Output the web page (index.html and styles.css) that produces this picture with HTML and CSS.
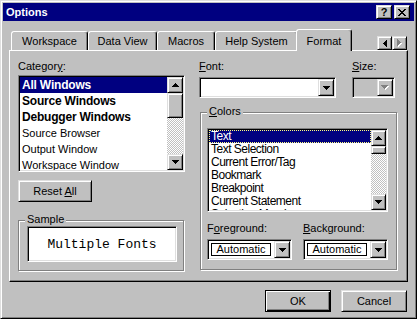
FILE: index.html
```html
<!DOCTYPE html>
<html lang="en">
<head>
    <meta charset="UTF-8">
    <meta name="viewport" content="width=device-width, initial-scale=1.0">
    <title>Options</title>
    <link rel="stylesheet" href="styles.css">
</head>
<body>
<div class="window">
    <div class="titlebar">
        <span class="title">Options</span>
        <div class="caption-buttons">
            <div class="caption-btn raised">?</div>
            <div class="caption-btn raised">
                <svg width="8" height="7" viewBox="0 0 8 7"><path d="M0 0h2v1h-2zM6 0h2v1h-2zM1 1h2v1h-2zM5 1h2v1h-2zM2 2h4v1h-4zM3 3h2v1h-2zM2 4h4v1h-4zM1 5h2v1h-2zM5 5h2v1h-2zM0 6h2v1h-2zM6 6h2v1h-2z"/></svg>
            </div>
        </div>
    </div>

    <div class="client">
        <div class="tabs">
            <div class="tab tab-workspace">Workspace</div>
            <div class="tab tab-dataview">Data View</div>
            <div class="tab tab-macros">Macros</div>
            <div class="tab tab-help">Help System</div>
            <div class="tab tab-format active">Format</div>
            <div class="tab-arrows">
                <div class="tab-arrow raised">
                    <svg width="4" height="7" viewBox="0 0 4 7"><path d="M3 0h1v7h-1v-1h-1v-1h-1v-1h-1v-1h1v-1h1v-1h1z"/></svg>
                </div>
                <div class="tab-arrow raised">
                    <svg width="5" height="8" viewBox="0 0 5 8"><path fill="#fff" d="M1 1h1v1h1v1h1v1h1v1h-1v1h-1v1h-1v1h-1z"/><path fill="#808080" d="M0 0h1v1h1v1h1v1h1v1h-1v1h-1v1h-1v1h-1z"/></svg>
                </div>
            </div>
        </div>

        <div class="panel">
            <div class="left-col">
                <div class="label">Categor<u>y</u>:</div>
                <div class="listbox category sunken">
                    <div class="items">
                        <div class="item bold selected">All Windows</div>
                        <div class="item bold">Source Windows</div>
                        <div class="item bold">Debugger Windows</div>
                        <div class="item">Source Browser</div>
                        <div class="item">Output Window</div>
                        <div class="item">Workspace Window</div>
                    </div>
                    <div class="scrollbar">
                        <div class="sb-btn raised">
                            <svg width="7" height="4" viewBox="0 0 7 4"><path d="M3 0h1v1h1v1h1v1h1v1h-7v-1h1v-1h1v-1h1z"/></svg>
                        </div>
                        <div class="sb-thumb raised"></div>
                        <div class="sb-btn raised down">
                            <svg width="7" height="4" viewBox="0 0 7 4"><path d="M0 0h7v1h-1v1h-1v1h-1v1h-1v-1h-1v-1h-1v-1h-1z"/></svg>
                        </div>
                    </div>
                </div>

                <div class="btn raised reset"><span>Reset <u>A</u>ll</span></div>

                <div class="group sample-group">
                    <span class="group-label">Sample</span>
                    <div class="sample sunken">Multiple Fonts</div>
                </div>
            </div>

            <div class="right-col">
                <div class="top-row">
                    <div class="field font-field">
                        <div class="label"><u>F</u>ont:</div>
                        <div class="combo sunken">
                            <div class="combo-value"></div>
                            <div class="combo-btn raised">
                                <svg width="7" height="4" viewBox="0 0 7 4"><path d="M0 0h7v1h-1v1h-1v1h-1v1h-1v-1h-1v-1h-1v-1h-1z"/></svg>
                            </div>
                        </div>
                    </div>
                    <div class="field size-field">
                        <div class="label"><u>S</u>ize:</div>
                        <div class="combo sunken disabled">
                            <div class="combo-value"></div>
                            <div class="combo-btn raised">
                                <svg width="8" height="5" viewBox="0 0 8 5"><path fill="#fff" d="M1 1h7v1h-1v1h-1v1h-1v1h-1v-1h-1v-1h-1v-1h-1z"/><path fill="#808080" d="M0 0h7v1h-1v1h-1v1h-1v1h-1v-1h-1v-1h-1v-1h-1z"/></svg>
                            </div>
                        </div>
                    </div>
                </div>

                <div class="group colors-group">
                    <span class="group-label"><u>C</u>olors</span>
                    <div class="listbox colors sunken">
                        <div class="items">
                            <div class="item selected focused">Text</div>
                            <div class="item">Text Selection</div>
                            <div class="item">Current Error/Tag</div>
                            <div class="item">Bookmark</div>
                            <div class="item">Breakpoint</div>
                            <div class="item">Current Statement</div>
                            <div class="item">Selection Margin</div>
                        </div>
                        <div class="scrollbar">
                            <div class="sb-btn raised">
                                <svg width="7" height="4" viewBox="0 0 7 4"><path d="M3 0h1v1h1v1h1v1h1v1h-7v-1h1v-1h1v-1h1z"/></svg>
                            </div>
                            <div class="sb-thumb raised"></div>
                            <div class="sb-btn raised down">
                                <svg width="7" height="4" viewBox="0 0 7 4"><path d="M0 0h7v1h-1v1h-1v1h-1v1h-1v-1h-1v-1h-1v-1h-1z"/></svg>
                            </div>
                        </div>
                    </div>

                    <div class="color-fields">
                        <div class="field color-field">
                            <div class="label">F<u>o</u>reground:</div>
                            <div class="combo sunken">
                                <div class="combo-value"><span class="auto-box">Automatic</span></div>
                                <div class="combo-btn raised">
                                    <svg width="7" height="4" viewBox="0 0 7 4"><path d="M0 0h7v1h-1v1h-1v1h-1v1h-1v-1h-1v-1h-1v-1h-1z"/></svg>
                                </div>
                            </div>
                        </div>
                        <div class="field color-field">
                            <div class="label"><u>B</u>ackground:</div>
                            <div class="combo sunken">
                                <div class="combo-value"><span class="auto-box">Automatic</span></div>
                                <div class="combo-btn raised">
                                    <svg width="7" height="4" viewBox="0 0 7 4"><path d="M0 0h7v1h-1v1h-1v1h-1v1h-1v-1h-1v-1h-1v-1h-1z"/></svg>
                                </div>
                            </div>
                        </div>
                    </div>
                </div>
            </div>
        </div>

        <div class="footer">
            <div class="btn default">OK</div>
            <div class="btn raised">Cancel</div>
        </div>
    </div>
</div>
</body>
</html>
```

FILE: styles.css
```css
* {
    box-sizing: border-box;
}
body {
    margin: 0;
    font-family: "Liberation Sans", Arial, sans-serif;
    font-size: 11px;
    color: #000;
    background: #c0c0c0;
}
u {
    text-decoration-thickness: 1px;
    text-underline-offset: 1px;
}

/* shared 3d borders */
.raised {
    background: #c0c0c0;
    border: 1px solid;
    border-color: #dfdfdf #000 #000 #dfdfdf;
    box-shadow: inset 1px 1px #fff, inset -1px -1px #808080;
}
.sunken {
    border: 1px solid;
    border-color: #808080 #fff #fff #808080;
    box-shadow: inset 1px 1px #000, inset -1px -1px #dfdfdf;
    padding: 1px;
}

.window {
    width: 417px;
    height: 319px;
    background: #c0c0c0;
    border: 1px solid;
    border-color: #dfdfdf #000 #000 #dfdfdf;
    box-shadow: inset 1px 1px #fff, inset -1px -1px #808080;
    padding: 2px;
    display: flex;
    flex-direction: column;
}

.titlebar {
    height: 18px;
    flex: none;
    background: #000080;
    color: #fff;
    display: flex;
    align-items: center;
    padding: 0 4px 0 3px;
}
.title {
    flex: 1;
    font-weight: bold;
}
.caption-buttons {
    display: flex;
    gap: 2px;
}
.caption-btn {
    width: 16px;
    height: 14px;
    display: flex;
    align-items: center;
    justify-content: center;
    color: #000;
    font-weight: bold;
    font-size: 11px;
    line-height: 1;
}

.client {
    flex: 1;
    padding: 8px 6px 0;
    display: flex;
    flex-direction: column;
}

/* tabs */
.tabs {
    height: 21px;
    flex: none;
    display: flex;
    align-items: flex-end;
    padding-left: 2px;
}
.tab {
    height: 19px;
    display: flex;
    align-items: center;
    justify-content: center;
    border: 1px solid;
    border-bottom: none;
    border-color: #fff #000 transparent #fff;
    border-radius: 3px 3px 0 0;
    box-shadow: inset -1px 0 #808080;
    background: #c0c0c0;
}
.tab-workspace { width: 77px; }
.tab-dataview { width: 69px; }
.tab-macros { width: 58px; }
.tab-help { width: 83px; }
.tab-format { width: 56px; }
.tab.active {
    height: 22px;
    margin-bottom: -1px;
    margin-left: -2px;
    padding-top: 1px;
    position: relative;
    z-index: 1;
}
.tab-arrows {
    margin-left: auto;
    margin-right: 1px;
    display: flex;
}
.tab-arrow {
    width: 15px;
    height: 14px;
    display: flex;
    align-items: center;
    justify-content: center;
}

/* panel */
.panel {
    height: 232px;
    flex: none;
    border: 1px solid;
    border-color: #fff #000 #000 #fff;
    box-shadow: inset -1px -1px #808080;
    display: flex;
    gap: 15px;
    padding: 9px 0 0 8px;
}
.label {
    height: 13px;
    line-height: 13px;
    white-space: nowrap;
}
.left-col {
    width: 166px;
    display: flex;
    flex-direction: column;
}
.right-col {
    width: 199px;
    display: flex;
    flex-direction: column;
}

/* list boxes */
.listbox {
    display: flex;
    background: #fff;
    overflow: hidden;
}
.listbox.category {
    margin-top: 2px;
    width: 167px;
    height: 97px;
}
.items {
    flex: 1;
    overflow: hidden;
}
.item {
    height: 16px;
    line-height: 16px;
    padding-left: 2px;
    white-space: nowrap;
}
.item.bold {
    font-weight: bold;
    font-size: 12px;
    letter-spacing: -0.2px;
}
.item.selected {
    background: #000080;
    color: #fff;
}
.listbox.colors {
    width: 181px;
    height: 84px;
}
.listbox.colors .item {
    height: 13px;
    line-height: 13px;
    font-size: 12px;
    letter-spacing: -0.5px;
}
.item.focused {
    outline: 1px dotted #ffff80;
    outline-offset: -1px;
}

.scrollbar {
    width: 16px;
    display: flex;
    flex-direction: column;
    background: repeating-conic-gradient(#c0c0c0 0 25%, #fff 0 50%) 0 0 / 2px 2px;
}
.listbox.colors .scrollbar {
    width: 15px;
}
.sb-btn {
    height: 16px;
    flex: none;
    display: flex;
    align-items: center;
    justify-content: center;
}
.sb-btn.down {
    margin-top: auto;
}
.sb-thumb {
    height: 25px;
    flex: none;
}
.listbox.colors .sb-thumb {
    height: 8px;
}

/* buttons */
.btn {
    height: 22px;
    width: 66px;
    display: flex;
    align-items: center;
    justify-content: center;
    white-space: nowrap;
}
.btn.reset {
    width: 74px;
    margin-top: 8px;
}
.btn.default {
    background: #c0c0c0;
    border: 1px solid #000;
    box-shadow: inset 1px 1px #fff, inset -1px -1px #000, inset -2px -2px #808080;
}

/* group boxes */
.group {
    position: relative;
    border: 1px solid #808080;
    box-shadow: inset 1px 1px #fff, 1px 1px #fff;
}
.group-label {
    position: absolute;
    top: -8px;
    left: 6px;
    padding: 0 2px;
    line-height: 13px;
    background: #c0c0c0;
}
.sample-group {
    margin-top: 18px;
    height: 51px;
    padding: 5px 0 0 8px;
}
.sample {
    width: 150px;
    height: 36px;
    background: #fff;
    display: flex;
    align-items: center;
    justify-content: center;
    font-family: "Liberation Mono", "Courier New", monospace;
    font-size: 13px;
}
.colors-group {
    margin: 14px 0 0 1px;
    width: 197px;
    height: 158px;
    padding: 15px 0 0 6px;
}

/* combo boxes */
.top-row {
    display: flex;
    gap: 16px;
}
.field {
    display: flex;
    flex-direction: column;
}
.font-field { width: 137px; }
.size-field { width: 43px; }
.color-field { width: 85px; }
.combo {
    margin-top: 4px;
    height: 21px;
    display: flex;
    background: #fff;
}
.combo.disabled {
    background: #c0c0c0;
}
.combo-value {
    flex: 1;
    display: flex;
    align-items: center;
}
.combo-btn {
    width: 16px;
    display: flex;
    align-items: center;
    justify-content: center;
}
.color-fields {
    display: flex;
    gap: 11px;
    margin-top: 10px;
}
.auto-box {
    margin-left: 2px;
    width: 60px;
    height: 13px;
    line-height: 11px;
    border: 1px solid #000;
    text-align: center;
}

.footer {
    display: flex;
    justify-content: flex-end;
    gap: 10px;
    padding: 8px 1px 0 0;
}
```
